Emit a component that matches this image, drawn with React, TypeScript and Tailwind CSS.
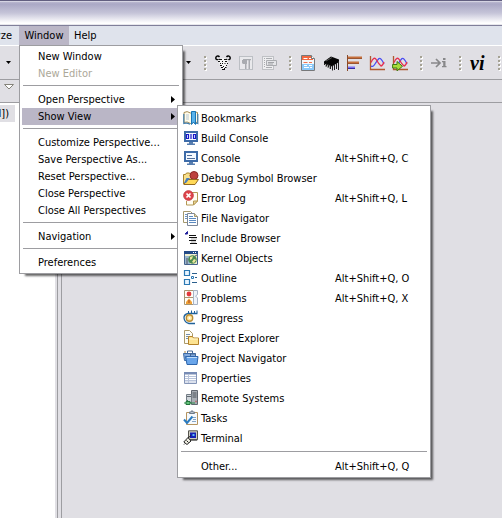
import type { ReactNode } from "react";

const Icon = ({ children }: { children: ReactNode }) => (
  <svg viewBox="0 0 16 16" className="block size-4 shrink-0" aria-hidden="true">
    {children}
  </svg>
);

/* ---------- toolbar icons ---------- */

const GnuIcon = () => (
  <Icon>
    <path d="M5 4.500Q2.500 5.500 1 4Q.3 2 2 1.200Q3.500.6 4.500 2" fill="none" stroke="#000" strokeWidth="1.400" />
    <path d="M11 4.500Q13.500 5.500 15 4Q15.700 2 14 1.200Q12.500.6 11.500 2" fill="none" stroke="#000" strokeWidth="1.400" />
    <path d="M4.500 4L8 3L11.500 4L14 5L12.500 7L12 11L9 15L6.500 13.500L4.500 9L2.500 5.500Z" fill="#f4f4f4" />
    <path d="M4 4.500h3M9 4.500h3M3 6.500h2M5 8.500h1M7 6.500h1M10 6.500h2M12 8.500h1M7 8.500h1M9.500 8.500h1M5 10.500h2M8 11.500h1M11 10.500h1M6 12.500h2M10 12.500h1.500M7 14.500h3M9 13.500h1" stroke="#111" />
  </Icon>
);

const PilcrowIcon = () => (
  <Icon>
    <rect x="1.500" y="1.500" width="13" height="13" fill="#e9e9ec" stroke="#bcbfc4" />
    <path d="M5 4h8v1.200h-8zM4 5h5v4h-4l-1-1zM7 5h1.500v9h-1.500zM10.500 5h1.500v9h-1.500z" fill="#a9abb0" />
  </Icon>
);

const BlockSelectIcon = () => (
  <Icon>
    <rect x="1.500" y="1.500" width="11" height="13" fill="#eeeef0" stroke="#bfc1c5" />
    <path d="M3 3.500h1M5 3.500h6M3 5.500h1M3 7.500h1M3 9.500h1M3 11.500h1M5 12.500h6" stroke="#aaacb0" />
    <path d="M5.500 5.500h10v5h-10z" fill="#e4e5e8" stroke="#aaacb0" />
    <path d="M7 7.500h6M7 9h5" stroke="#a2a4a8" />
  </Icon>
);

const LogIcon = () => (
  <Icon>
    <path d="M2 1h10l3 3v11.500H2z" fill="#f6f8fa" />
    <path d="M2 1h9.500l1.500 2v2H2z" fill="#f4673f" />
    <path d="M2 9h12v6H2z" fill="#8cc8f8" />
    <path d="M3.500 3.500h4M9 3.500h2" stroke="#fff" />
    <path d="M3.500 7.500h4M9 7.500h3" stroke="#ef7352" />
    <path d="M4 10.500h3M9 10.500h3M4 12.500h5M10 12.500h2" stroke="#fff" />
    <path d="M1.500.5h10l3 3v12h-13z" fill="none" stroke="#77787a" />
    <path d="M11.500.5v3h3" fill="#fff" stroke="#77787a" />
  </Icon>
);

const ChipIcon = () => (
  <Icon>
    <path d="M1 6.500L8 1.500L16 4.500V7L9 11.500L1 8.500Z" fill="#050505" />
    <path d="M3 6L9 2.500" stroke="#555" />
    <path d="M1.500 8v2M3.500 8.500v3M5.500 9v3.500M7.500 10v4M9.500 10.500v5M11.500 9.500v5.500M13.500 8v6M15.500 6v9" stroke="#222" />
    <path d="M2.500 9v3M4.500 10v3M6.500 11v3" stroke="#a5a5a5" />
  </Icon>
);

const BarsIcon = () => (
  <Icon>
    <path d="M1.500 0v16" stroke="#8a4a2a" />
    <path d="M2 2.500h14M2 7.500h11" stroke="#c6703c" strokeWidth="2" />
    <path d="M2 3.500h14M2 8.500h11" stroke="#9b5430" />
    <path d="M2 12.500h7" stroke="#7a6ff0" strokeWidth="2" />
    <path d="M2 13.500h7" stroke="#322ca4" />
  </Icon>
);

const Curves = () => (
  <>
    <path d="M1.500 1v13.500H16" fill="none" stroke="#b0592f" strokeWidth="1.300" />
    <path d="M2 11Q4 12.500 6 9T10 3.500Q12 2.500 15 9" fill="none" stroke="#4b4df2" strokeWidth="1.300" />
    <path d="M2 7.500Q5 .5 7.500 5T12 11Q13.500 11 15 7" fill="none" stroke="#e6304f" strokeWidth="1.300" />
  </>
);

const ChartIcon = () => (
  <Icon>
    <Curves />
  </Icon>
);

const ChartRunIcon = () => (
  <Icon>
    <Curves />
    <path d="M.6 9.500h4.400V6.500l5.500 4.800L5 15.800V13H.6z" fill="#a9dc3c" stroke="#3d7a14" />
  </Icon>
);

const StepIcon = () => (
  <Icon>
    <path d="M0 8h8.500M5 4l4 4l-4 4" fill="none" stroke="#88888a" strokeWidth="1.700" />
    <path d="M12 3h2.500v2h-2.500zM11 6h3.500v5h1v1.200h-4.500v-1.200h1.200v-3.800h-1.200z" fill="#88888a" />
  </Icon>
);

/* ---------- view icons ---------- */

const BookmarksIcon = () => (
  <Icon>
    <path d="M1 2.500Q4 .5 7.500 3Q11 .5 14.500 2.500V12.500Q11 11 7.500 13.500Q4 11 1 12.500Z" fill="#fffbe9" stroke="#a58b55" />
    <path d="M.8 4v9.500Q4 12.300 7 14.300M14.800 4v9.500Q13 12.800 11 13.300" fill="none" stroke="#427fae" strokeWidth="1.200" />
    <path d="M3 5h3M3 7h3M3 9h3" stroke="#b3c5d5" />
    <path d="M8.500 1.500h4v13l-2-2.500l-2 2.500z" fill="#5ab2ea" stroke="#1975b5" />
  </Icon>
);

const MonitorFrame = ({ children }: { children: ReactNode }) => (
  <Icon>
    <path d="M2 2h12v9H2z" fill="#f4f9ff" stroke="#3d6ba8" strokeWidth="2" />
    <path d="M6 12h4v1.500h2v1.500h-8v-1.500h2z" fill="#587eaf" />
    {children}
  </Icon>
);

const BuildConsoleIcon = () => (
  <MonitorFrame>
    <path d="M3.500 4.500h2v4h-2zM8 4v5M10.500 4.500h2v4h-2z" fill="none" stroke="#1919c9" strokeWidth="1.200" />
  </MonitorFrame>
);

const ConsoleIcon = () => (
  <MonitorFrame>
    <path d="M4 5.500h5M4 8.500h8" stroke="#526f9b" />
  </MonitorFrame>
);

const DebugSymbolIcon = () => (
  <Icon>
    <path d="M.5 14V4.500h2l1-1.500h3l1 1.500h4V14z" fill="#f7e08c" stroke="#a9832c" />
    <circle cx="11" cy="5.500" r="4" fill="#bd413f" stroke="#8d2929" />
    <path d="M1 14.500L4 9.500H15.500L12 14.500Z" fill="#ffd958" stroke="#946a20" />
    <path d="M1 13L3.500 8H7L3 13Z" fill="#4a7ebb" />
  </Icon>
);

const ErrorLogIcon = () => (
  <Icon>
    <path d="M6.500 2.500h8V11l-4 4h-7V11" fill="#fffdf2" stroke="#b49853" />
    <path d="M14.500 11h-4v4z" fill="#ebd898" stroke="#b49853" />
    <circle cx="5.500" cy="5.500" r="4.800" fill="#e0454b" stroke="#c23a42" />
    <path d="M3.500 3.500l4 4M7.500 3.500l-4 4" stroke="#fff" strokeWidth="1.700" />
  </Icon>
);

const FileNavigatorIcon = () => (
  <Icon>
    <path d="M.5 1.500h7l3 3v8H.5z" fill="#fff" stroke="#a5986d" />
    <path d="M2 4.500h4M2 6.500h4M2 8.500h4" stroke="#6c93bf" />
    <path d="M4.500 3.500h7l3 3v9h-10z" fill="#fdfeff" stroke="#7c8798" />
    <path d="M11.500 3.500v3h3" fill="#e0d4aa" stroke="#a5986d" />
    <path d="M6 8.500h7M6 10.500h7M6 12.500h7" stroke="#5b8ac0" />
    <path d="M6 6.500h4" stroke="#5b8ac0" />
  </Icon>
);

const IncludeBrowserIcon = () => (
  <Icon>
    <path d="M2 4L4.500 1.500V4Z" fill="#20209c" stroke="#20209c" />
    <path d="M6 5.500h7M6 7.500h8M6 10.500h7M7 13.500h7" stroke="#111" />
    <path d="M8 9h6M8 12h5" stroke="#aaa" />
  </Icon>
);

const KernelObjectsIcon = () => (
  <Icon>
    <path d="M1.500 1.500h13v13h-13z" fill="#f1efcf" stroke="#44628d" />
    <path d="M1 1h14v3H1z" fill="#244b86" />
    <path d="M10 2.500h1M12 2.500h1" stroke="#fff" />
    <path d="M2 6h5v8H2z" fill="#9ab8cf" />
    <circle cx="9.500" cy="9.500" r="4.300" fill="#4d8c52" />
    <path d="M7 7L10 6L9 9L7 10ZM11 9L13 10L11 13L9 12Z" fill="#efe79c" />
    <path d="M4 8v6M12 6l2-1" stroke="#556" />
  </Icon>
);

const OutlineIcon = () => (
  <Icon>
    <path d="M1.500.5h5v5h-5zM1.500 9.500h5v5h-5z" fill="#e9f5ff" stroke="#2b78b3" strokeWidth="1.200" />
    <path d="M9 3.500h5M9 12.500h5" stroke="#2b5f8d" />
    <path d="M8.500 6.500h2v2h-2z" fill="#fff" stroke="#2b78b3" />
    <path d="M12 7.500h2" stroke="#2b5f8d" />
  </Icon>
);

const ProblemsIcon = () => (
  <Icon>
    <path d="M1.500.5h9v14h-9z" fill="#fffdf6" stroke="#a69572" />
    <path d="M2 7.500h9" stroke="#a69572" />
    <path d="M10.500.5h4v4l-2 1.500l2 2v6.500h-4z" fill="#eef3f9" stroke="#a7b3c6" />
    <circle cx="6" cy="4" r="2.400" fill="#e3393c" />
    <path d="M6 8.500l3 3.500v2h-6v-2z" fill="#f0a136" />
    <path d="M6 10v3" stroke="#a9461d" />
  </Icon>
);

const ProgressIcon = () => (
  <Icon>
    <path d="M14.500 3.500H5Q.8 4.500 1 8Q1.500 12.500 6 13.500h6" fill="none" stroke="#20629a" strokeWidth="1.300" />
    <path d="M5.500 3V1M8.500 3V.5M11.500 3V1M14 3V.5" stroke="#20629a" />
    <circle cx="6.500" cy="8" r="3.200" fill="#ffe59a" stroke="#ba8d34" strokeWidth="1.400" />
    <circle cx="6.500" cy="8" r="1" fill="#fff" />
  </Icon>
);

const ProjectExplorerIcon = () => (
  <Icon>
    <path d="M1.500.5h5l3 3v10h-8z" fill="#fffdf4" stroke="#ac9968" />
    <path d="M3 4.500h4M3 6.500h3M3 8.500h2" stroke="#738fae" />
    <path d="M5.500 14.500V6.500h4l1 1.500h5v6.500z" fill="#fde391" stroke="#b5822a" />
    <path d="M6 9h9" stroke="#fff6cb" />
  </Icon>
);

const ProjectNavigatorIcon = () => (
  <Icon>
    <path d="M.5 3.500h12v7H1.500z" fill="#83aadd" stroke="#3e6aa5" />
    <path d="M4.500 3.500V1h5v2.500M7.500 6.500V4h5v2.500" fill="none" stroke="#496a96" />
    <path d="M2.500 6.500h12.500l-1 8h-10z" fill="#69a5ea" stroke="#2e66ad" />
    <path d="M4 7.500h10" stroke="#c1defb" />
    <path d="M1 2h2" stroke="#b18b44" />
  </Icon>
);

const PropertiesIcon = () => (
  <Icon>
    <path d="M1.500 2.500h12v11h-12z" fill="#fff" stroke="#8495b7" />
    <path d="M1 2h13v2.500H1z" fill="#788cb5" />
    <path d="M2 6.500h11M2 8.500h11M2 10.500h11M2 12h11M5.500 4v9" stroke="#b9c4db" />
  </Icon>
);

const RemoteSystemsIcon = () => (
  <Icon>
    <path d="M8.500.5h6v14h-6z" fill="#a9afb6" stroke="#606770" />
    <path d="M9.500 3h4M9.500 5h4M9.500 7h4" stroke="#4d545c" />
    <path d="M3.500 4.500h5v8h-5z" fill="#cfd5da" stroke="#757e87" />
    <path d="M4 6.500h4" stroke="#626a72" />
    <path d="M1 13h8M4.500 10v3M9 13h3" stroke="#328c4c" />
    <path d="M3 11.500h4v3H3z" fill="#62c17a" stroke="#22743b" />
    <path d="M12.500 11.500h1" stroke="#c43a3a" strokeWidth="1.500" />
  </Icon>
);

const TasksIcon = () => (
  <Icon>
    <path d="M3.500 2.500h11v12h-11z" fill="#f5f9fd" stroke="#b4935f" />
    <path d="M6.500 3.500V2h1.500l1-1.500l1 1.500h1.500v1.500z" fill="#b9c2cd" stroke="#6e7a89" />
    <path d="M10 7.500h3M10 9.500h3M9 11.500h4" stroke="#86a5c8" />
    <path d="M1 9.500l3 3.500L9.500 6.500" fill="none" stroke="#2a7bc0" strokeWidth="2" />
  </Icon>
);

const TerminalIcon = () => (
  <Icon>
    <path d="M5.500.8h9v9H5.500z" fill="#d2d0c4" stroke="#55544e" />
    <path d="M7 2.500h6v5.500H7z" fill="#1522b5" />
    <path d="M9.500 4h2v2h-2z" fill="#5fbdf5" />
    <path d="M7 10h7" stroke="#333" />
    <path d="M.8 12L5 7.500L8 11L4 14.500Z" fill="#f0eee2" stroke="#222" />
    <path d="M3.500 10.500l2 2M1 14.500l1-1" stroke="#222" />
    <path d="M5 8L8 5.500" stroke="#222" />
  </Icon>
);

/* ---------- menus ---------- */

const MenuSeparator = () => (
  <li role="separator" className="h-[9px] pt-[3px] px-px">
    <div className="h-px bg-[#9d9da1]" />
  </li>
);

type MenuRowProps = {
  label: string;
  disabled?: boolean;
  active?: boolean;
  submenu?: ReactNode;
};

const MenuRow = ({ label, disabled, active, submenu }: MenuRowProps) => (
  <li role="none" className="relative">
    <button
      type="button"
      role="menuitem"
      disabled={disabled}
      aria-haspopup={submenu ? "menu" : undefined}
      className={`flex h-[17px] w-full items-center justify-between pr-[5px] pl-4 text-left leading-[17px] ${
        active ? "bg-[#bab6c6]" : ""
      } ${disabled ? "text-[#aca899]" : ""}`}
    >
      <span>{label}</span>
      {submenu && (
        <svg viewBox="0 0 4 7" className="h-[7px] w-1" aria-hidden="true">
          <path d="M0 0L4 3.500L0 7Z" fill="#000" />
        </svg>
      )}
    </button>
    {active && submenu}
  </li>
);

const menuBox =
  "absolute z-10 border border-[#9d9da1] bg-white p-[2px] shadow-[4px_4px_2px_-2px_rgba(0,0,0,0.6)]";

const views: { label: string; icon: ReactNode; keys?: string }[] = [
  { label: "Bookmarks", icon: <BookmarksIcon /> },
  { label: "Build Console", icon: <BuildConsoleIcon /> },
  { label: "Console", icon: <ConsoleIcon />, keys: "Alt+Shift+Q, C" },
  { label: "Debug Symbol Browser", icon: <DebugSymbolIcon /> },
  { label: "Error Log", icon: <ErrorLogIcon />, keys: "Alt+Shift+Q, L" },
  { label: "File Navigator", icon: <FileNavigatorIcon /> },
  { label: "Include Browser", icon: <IncludeBrowserIcon /> },
  { label: "Kernel Objects", icon: <KernelObjectsIcon /> },
  { label: "Outline", icon: <OutlineIcon />, keys: "Alt+Shift+Q, O" },
  { label: "Problems", icon: <ProblemsIcon />, keys: "Alt+Shift+Q, X" },
  { label: "Progress", icon: <ProgressIcon /> },
  { label: "Project Explorer", icon: <ProjectExplorerIcon /> },
  { label: "Project Navigator", icon: <ProjectNavigatorIcon /> },
  { label: "Properties", icon: <PropertiesIcon /> },
  { label: "Remote Systems", icon: <RemoteSystemsIcon /> },
  { label: "Tasks", icon: <TasksIcon /> },
  { label: "Terminal", icon: <TerminalIcon /> },
];

const viewRow = "grid w-full grid-cols-[16px_132px_1fr] items-center gap-x-[2px] pl-[3px] text-left";

const ShowViewMenu = () => (
  <ul role="menu" aria-label="Show View" className={`${menuBox} -top-[3px] left-full -ml-[3px] w-[254px]`}>
    {views.map((v) => (
      <li role="none" key={v.label}>
        <button type="button" role="menuitem" className={`${viewRow} h-5`}>
          {v.icon}
          <span className="pt-[2px]">{v.label}</span>
          <span className="pt-[2px]">{v.keys}</span>
        </button>
      </li>
    ))}
    <MenuSeparator />
    <li role="none">
      <button type="button" role="menuitem" className={`${viewRow} h-[18px]`}>
        <span />
        <span className="pt-[2px]">Other...</span>
        <span className="pt-[2px]">Alt+Shift+Q, Q</span>
      </button>
    </li>
  </ul>
);

const WindowMenu = () => (
  <ul role="menu" aria-label="Window" className={`${menuBox} top-full left-0 w-[164px]`}>
    <MenuRow label="New Window" />
    <MenuRow label="New Editor" disabled />
    <MenuSeparator />
    <MenuRow label="Open Perspective" submenu={<></>} />
    <MenuRow label="Show View" active submenu={<ShowViewMenu />} />
    <MenuSeparator />
    <MenuRow label="Customize Perspective..." />
    <MenuRow label="Save Perspective As..." />
    <MenuRow label="Reset Perspective..." />
    <MenuRow label="Close Perspective" />
    <MenuRow label="Close All Perspectives" />
    <MenuSeparator />
    <MenuRow label="Navigation" submenu={<></>} />
    <MenuSeparator />
    <MenuRow label="Preferences" />
  </ul>
);

/* ---------- toolbar ---------- */

const Grip = () => (
  <div className="flex w-4 shrink-0 flex-col gap-[2px] pl-2">
    {[0, 1, 2, 3].map((i) => (
      <span key={i} className="size-[2px] bg-[#a5a294] shadow-[1px_1px_0_#fff]" />
    ))}
  </div>
);

const ToolButton = ({ label, children }: { label: string; children: ReactNode }) => (
  <button type="button" aria-label={label} className="w-[23px] shrink-0 pl-[3px]">
    {children}
  </button>
);

const DropButton = ({ label }: { label: string }) => (
  <button type="button" aria-label={label} className="w-4 shrink-0 pl-[6px]">
    <svg viewBox="0 0 5 3" className="block h-[3px] w-[5px]" aria-hidden="true">
      <path d="M0 0H5L2.500 3Z" fill="#000" />
    </svg>
  </button>
);

export default function App() {
  return (
    <div className="flex h-screen flex-col overflow-hidden bg-[#e0dfe4] font-['DejaVu_Sans_Condensed','Liberation_Sans',sans-serif] text-[11px] leading-4 text-black">
      <header className="h-[26px] shrink-0 border-t border-b border-t-[#625f80] border-b-[#807f9a] bg-[linear-gradient(#f0f0f6_0px,#b9b7cf_1px,#aaa8c5_3px,#c5c4d8_12px,#ffffff_22px,#ffffff_23px,#d0d0da_24px)]" />

      <nav role="menubar" className="flex h-[19px] shrink-0 bg-[#dfe3ec]">
        <div className="flex w-[19px] shrink-0 justify-end pr-[7px]">
          <button type="button" role="menuitem">Analyze</button>
        </div>
        <div className="relative shrink-0">
          <button type="button" role="menuitem" aria-expanded="true" className="block h-full w-[50px] bg-[#bab6c6]">
            Window
          </button>
          <WindowMenu />
        </div>
        <button type="button" role="menuitem" className="px-[5px]">Help</button>
      </nav>

      <div className="flex h-[34px] shrink-0 items-center border-t border-white">
        <DropButton label="Run options" />
        <div className="w-[164px] shrink-0" />
        <DropButton label="Navigation history" />
        <Grip />
        <ToolButton label="GNU tools"><GnuIcon /></ToolButton>
        <ToolButton label="Show whitespace"><PilcrowIcon /></ToolButton>
        <ToolButton label="Block selection"><BlockSelectIcon /></ToolButton>
        <Grip />
        <ToolButton label="Log"><LogIcon /></ToolButton>
        <ToolButton label="Kernel"><ChipIcon /></ToolButton>
        <ToolButton label="Bar chart"><BarsIcon /></ToolButton>
        <ToolButton label="Line chart"><ChartIcon /></ToolButton>
        <ToolButton label="Run chart"><ChartRunIcon /></ToolButton>
        <Grip />
        <ToolButton label="Step into"><StepIcon /></ToolButton>
        <Grip />
        <button
          type="button"
          className="w-[23px] shrink-0 pl-[3px] text-left font-['Liberation_Serif',serif] text-[20px] leading-4 font-bold italic"
        >
          vi
        </button>
        <Grip />
      </div>

      <div className="h-6 shrink-0 border-t border-b border-[#9d9da1] pt-1 pl-1">
        <button type="button" aria-label="View menu" className="block">
          <svg viewBox="0 0 10 6" className="block h-[6px] w-[10px]" aria-hidden="true">
            <path d="M.5.5h9L5 5Z" fill="#fff" stroke="#85837a" />
          </svg>
        </button>
      </div>

      <main className="flex min-h-0 grow">
        <aside className="w-[55px] shrink-0 bg-white pt-[2px]">
          <div className="flex h-[17px] w-[15px] items-center justify-end overflow-hidden bg-[#e0dfe4] pr-[6px]">
            [d])
          </div>
        </aside>
        <div className="ml-[2px] w-[5px] shrink-0 border-x border-[#9d9da1]" />
        <section className="grow" aria-label="Editor area" />
      </main>
    </div>
  );
}
